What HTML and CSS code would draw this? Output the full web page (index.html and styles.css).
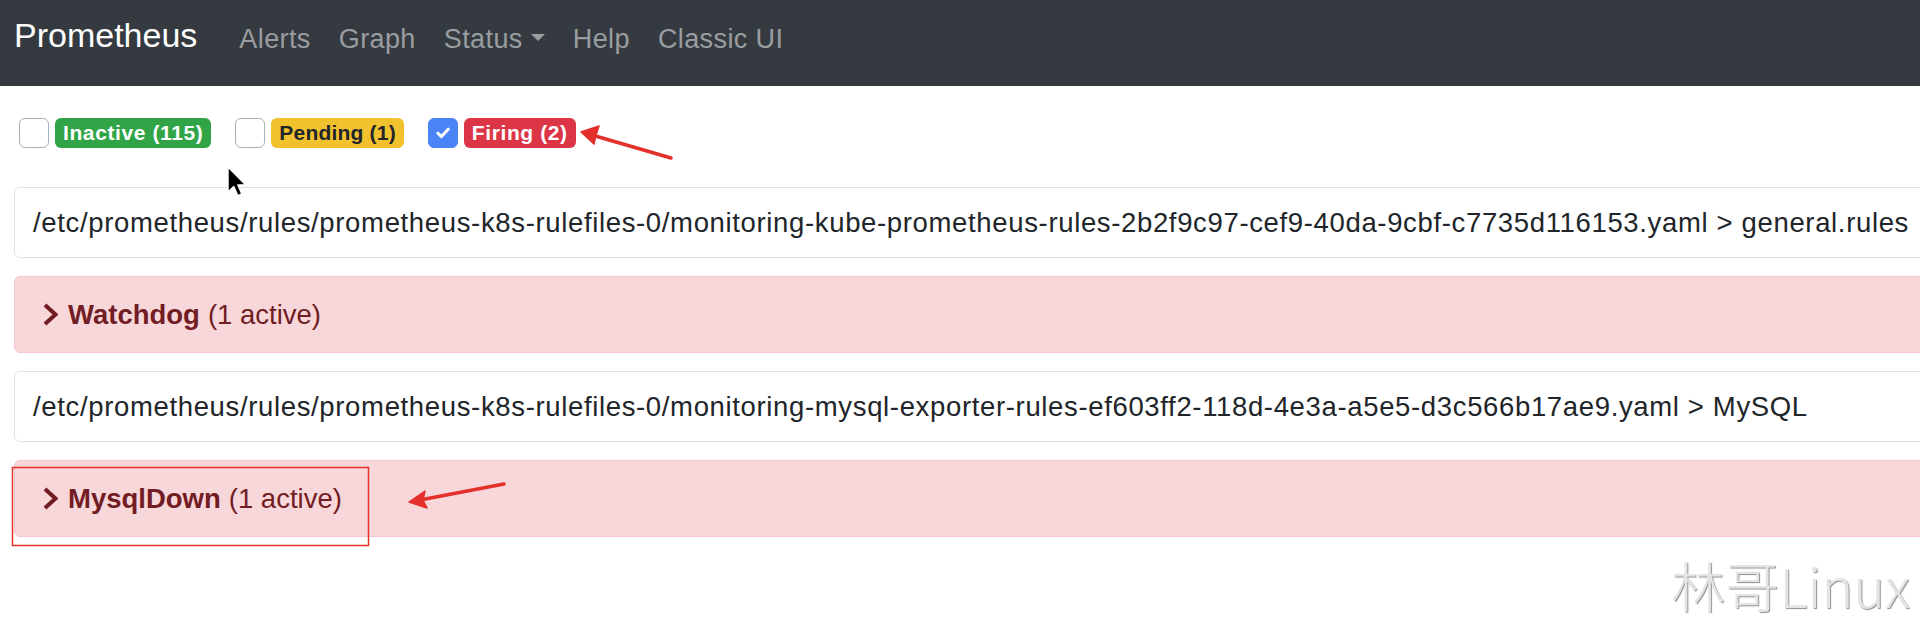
FILE: index.html
```html
<!DOCTYPE html>
<html lang="en">
<head>
<meta charset="utf-8">
<title>Prometheus Alerts</title>
<link rel="stylesheet" href="styles.css">
</head>
<body>
<nav class="navbar">
  <a class="brand" href="#">Prometheus</a>
  <ul class="nav">
    <li><a class="nav-link" href="#">Alerts</a></li>
    <li><a class="nav-link" href="#">Graph</a></li>
    <li><a class="nav-link" href="#">Status<span class="caret"></span></a></li>
    <li><a class="nav-link" href="#">Help</a></li>
    <li><a class="nav-link" href="#">Classic UI</a></li>
  </ul>
</nav>
<main class="content">
  <div class="filters">
    <label class="filter"><span class="checkbox"></span><span class="badge badge-inactive">Inactive (115)</span></label>
    <label class="filter"><span class="checkbox"></span><span class="badge badge-pending">Pending (1)</span></label>
    <label class="filter"><span class="checkbox checked"><svg viewBox="0 0 14 12" width="14" height="12"><path d="M1.8 6.2 L5.4 9.6 L12.2 2.2" fill="none" stroke="#fff" stroke-width="3" stroke-linecap="round" stroke-linejoin="round"/></svg></span><span class="badge badge-firing">Firing (2)</span></label>
  </div>

  <div class="group">/etc/prometheus/rules/prometheus-k8s-rulefiles-0/monitoring-kube-prometheus-rules-2b2f9c97-cef9-40da-9cbf-c7735d116153.yaml &gt; general.rules</div>
  <div class="alert-row">
    <svg class="chevron" viewBox="0 0 15 23" width="15" height="23"><polyline points="2,2 12.5,11.5 2,21" fill="none" stroke="#721c24" stroke-width="4"/></svg>
    <span class="rule-name">Watchdog</span>
    <span class="rule-count">(1 active)</span>
  </div>

  <div class="group">/etc/prometheus/rules/prometheus-k8s-rulefiles-0/monitoring-mysql-exporter-rules-ef603ff2-118d-4e3a-a5e5-d3c566b17ae9.yaml &gt; MySQL</div>
  <div class="alert-row">
    <svg class="chevron" viewBox="0 0 15 23" width="15" height="23"><polyline points="2,2 12.5,11.5 2,21" fill="none" stroke="#721c24" stroke-width="4"/></svg>
    <span class="rule-name">MysqlDown</span>
    <span class="rule-count">(1 active)</span>
  </div>
</main>

<svg class="annotations" width="1920" height="622" viewBox="0 0 1920 622">
  <rect x="12.5" y="467.5" width="356" height="78" fill="none" stroke="#e3302a" stroke-width="1.5"/>
  <g fill="#e3302a" stroke="#e3302a" stroke-linecap="round">
    <line x1="671" y1="158" x2="592" y2="135" stroke-width="3.5"/>
    <path d="M581 132 L599 126 L596 135 L594 144 Z" stroke-width="1.5" stroke-linejoin="round"/>
    <line x1="504" y1="484" x2="420" y2="500" stroke-width="3.5"/>
    <path d="M409 502 L425 491 L423 500 L427 508 Z" stroke-width="1.5" stroke-linejoin="round"/>
  </g>
  <path d="M228 167 L228 192 L233.8 186.5 L237.8 195.6 L241.8 193.9 L237.9 185 L245.6 184.8 Z" fill="#000" stroke="#fff" stroke-width="1.4" stroke-linejoin="round"/>
</svg>

<div class="watermark">林哥Linux</div>
</body>
</html>
```

FILE: styles.css
```css
* {
  box-sizing: border-box;
}

html, body {
  margin: 0;
  padding: 0;
  width: 1920px;
  height: 622px;
  overflow: hidden;
  background: #ffffff;
  font-family: "Liberation Sans", Arial, sans-serif;
  color: #212529;
  position: relative;
}

/* ---------- navbar ---------- */
.navbar {
  height: 86px;
  background: #343a40;
  display: flex;
  align-items: flex-start;
  padding-left: 14px;
}

.brand {
  font-size: 34px;
  line-height: 34px;
  color: #ffffff;
  text-decoration: none;
  padding-top: 18px;
}

.nav {
  list-style: none;
  margin: 0 0 0 28px;
  padding: 0;
  display: flex;
}

.nav-link {
  display: flex;
  align-items: center;
  padding: 26px 14px 0;
  font-size: 27px;
  line-height: 27px;
  letter-spacing: 0.4px;
  color: #9a9da0;
  text-decoration: none;
}

.caret {
  display: inline-block;
  margin-left: 8px;
  margin-top: -4px;
  width: 0;
  height: 0;
  border-top: 7px solid #9a9da0;
  border-left: 7.5px solid transparent;
  border-right: 7.5px solid transparent;
}

/* ---------- content ---------- */
.content {
  padding: 32px 0 0 14px;
  margin-right: -40px;
}

.filters {
  display: flex;
  gap: 24px;
  padding-left: 5px;
  margin-bottom: 39px;
}

.filter {
  display: flex;
  align-items: center;
  gap: 6px;
}

.checkbox {
  width: 30px;
  height: 30px;
  border: 1.5px solid #a8b0bb;
  border-radius: 6px;
  background: #ffffff;
  display: flex;
  align-items: center;
  justify-content: center;
}

.checkbox.checked {
  background: #4a84f6;
  border-color: #4a84f6;
}

.badge {
  height: 30px;
  line-height: 30px;
  padding: 0 8px;
  border-radius: 6px;
  font-size: 21px;
  font-weight: 700;
  letter-spacing: 0.6px;
  color: #ffffff;
}

.badge-inactive {
  background: #30a447;
}

.badge-pending {
  background: #f2c12e;
  color: #212529;
  letter-spacing: 0.2px;
}

.badge-firing {
  background: #dc3545;
}

.group {
  border: 1px solid #dee2e6;
  border-radius: 6px;
  padding: 15px 18px;
  font-size: 27.5px;
  line-height: 39px;
  letter-spacing: 0.65px;
  white-space: nowrap;
  margin-bottom: 18px;
}

.alert-row {
  display: flex;
  align-items: center;
  background: #f8d7da;
  border: 1px solid #f5c6cb;
  border-radius: 6px;
  padding: 18px 28px;
  height: 77px;
  font-size: 27.5px;
  line-height: 39px;
  color: #721c24;
  margin-bottom: 18px;
}

.chevron {
  flex: none;
  margin-right: 10px;
}

.rule-name {
  font-weight: 700;
  margin-right: 8px;
}

/* ---------- overlays ---------- */
.annotations {
  position: absolute;
  left: 0;
  top: 0;
  pointer-events: none;
}

.watermark {
  position: absolute;
  right: 10px;
  top: 549px;
  font-family: "Noto Sans CJK SC", "Noto Sans", sans-serif;
  font-size: 54px;
  line-height: 72px;
  font-weight: 300;
  color: #e4e4e4;
  text-shadow: 1px 1px 1px #8f8f8f;
  white-space: nowrap;
}
```
